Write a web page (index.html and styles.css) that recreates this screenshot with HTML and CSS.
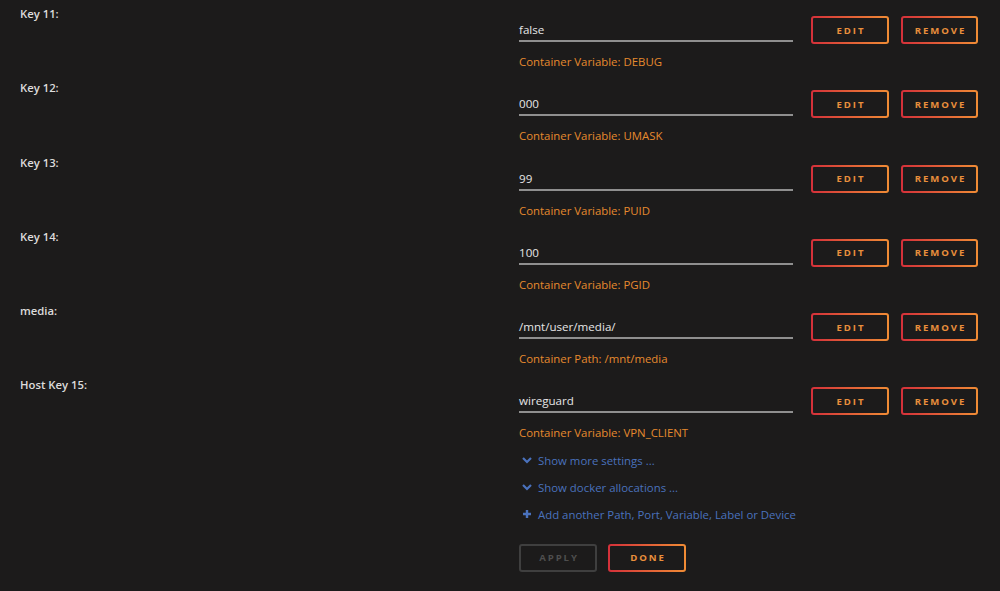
FILE: index.html
```html
<!DOCTYPE html>
<html lang="en">
<head>
    <meta charset="UTF-8" />
    <title>Container settings</title>
    <link rel="stylesheet" href="styles.css">
</head>
<body>
<div class="settings">
    <div class="row">
        <div class="label">Key 11:</div>
        <div class="value">
            <div class="field-line">
                <div class="input">false</div>
                <button class="btn">Edit</button>
                <button class="btn">Remove</button>
            </div>
            <div class="help">Container Variable: DEBUG</div>
        </div>
    </div>
    <div class="row">
        <div class="label">Key 12:</div>
        <div class="value">
            <div class="field-line">
                <div class="input">000</div>
                <button class="btn">Edit</button>
                <button class="btn">Remove</button>
            </div>
            <div class="help">Container Variable: UMASK</div>
        </div>
    </div>
    <div class="row">
        <div class="label">Key 13:</div>
        <div class="value">
            <div class="field-line">
                <div class="input">99</div>
                <button class="btn">Edit</button>
                <button class="btn">Remove</button>
            </div>
            <div class="help">Container Variable: PUID</div>
        </div>
    </div>
    <div class="row">
        <div class="label">Key 14:</div>
        <div class="value">
            <div class="field-line">
                <div class="input">100</div>
                <button class="btn">Edit</button>
                <button class="btn">Remove</button>
            </div>
            <div class="help">Container Variable: PGID</div>
        </div>
    </div>
    <div class="row">
        <div class="label">media:</div>
        <div class="value">
            <div class="field-line">
                <div class="input">/mnt/user/media/</div>
                <button class="btn">Edit</button>
                <button class="btn">Remove</button>
            </div>
            <div class="help">Container Path: /mnt/media</div>
        </div>
    </div>
    <div class="row">
        <div class="label">Host Key 15:</div>
        <div class="value">
            <div class="field-line">
                <div class="input">wireguard</div>
                <button class="btn">Edit</button>
                <button class="btn">Remove</button>
            </div>
            <div class="help">Container Variable: VPN_CLIENT</div>
        </div>
    </div>

    <div class="row extra">
        <div class="label"></div>
        <div class="value">
            <a href="#" class="link">
                <svg viewBox="0 0 10 10" width="10" height="10"><path d="M1 3 L5 7 L9 3" fill="none" stroke="currentColor" stroke-width="2.2"/></svg>
                Show more settings ...
            </a>
            <a href="#" class="link">
                <svg viewBox="0 0 10 10" width="10" height="10"><path d="M1 3 L5 7 L9 3" fill="none" stroke="currentColor" stroke-width="2.2"/></svg>
                Show docker allocations ...
            </a>
            <a href="#" class="link">
                <svg viewBox="0 0 10 10" width="10" height="10"><path d="M5 1 V9 M1 5 H9" fill="none" stroke="currentColor" stroke-width="2.4"/></svg>
                Add another Path, Port, Variable, Label or Device
            </a>
            <div class="actions">
                <button class="btn disabled">Apply</button>
                <button class="btn">Done</button>
            </div>
        </div>
    </div>
</div>
</body>
</html>
```

FILE: styles.css
```css
body {
    margin: 0;
    padding: 0;
    background-color: #1c1b1b;
    font-family: "Open Sans", "Noto Sans", sans-serif;
    color: #e2e2e2;
}
.settings {
    padding: 0 22px 0 20px;
}
.row {
    display: grid;
    grid-template-columns: 499px 1fr;
    height: 74.3px;
}
.label {
    padding-top: 6px;
    font-size: 11.3px;
    line-height: 16px;
    font-weight: 600;
    color: #dcdcdc;
}
.field-line {
    display: flex;
    align-items: flex-start;
    margin-top: 16px;
    height: 28px;
}
.input {
    width: 274px;
    height: 26px;
    box-sizing: border-box;
    padding-top: 6px;
    font-size: 11.6px;
    line-height: 16px;
    color: #e6e6e6;
    border-bottom: 2px solid #8f8f8f;
    margin-right: 18px;
}
.btn {
    width: 78px;
    height: 28px;
    margin-right: 12px;
    padding: 0 0 0 2px;
    box-sizing: border-box;
    font-family: "Open Sans", "Noto Sans", sans-serif;
    font-size: 9.6px;
    font-weight: 700;
    letter-spacing: 1.9px;
    text-transform: uppercase;
    color: #e98f3c;
    background: linear-gradient(#1c1b1b, #1c1b1b) padding-box,
                linear-gradient(90deg, #d4303a, #f08c35) border-box;
    border: 2px solid transparent;
    border-radius: 3px;
    cursor: pointer;
}
.btn:last-child {
    margin-right: 0;
    width: 77px;
}
.btn.disabled {
    color: #4e4e4e;
    background: #1c1b1b;
    border: 2px solid #3f3f3f;
    cursor: default;
}
.help {
    margin-top: 10px;
    font-size: 11.4px;
    line-height: 16px;
    color: #e68a2e;
}
.extra {
    height: auto;
    padding-top: 1px;
}
.link {
    display: flex;
    align-items: center;
    gap: 6px;
    height: 27px;
    font-size: 11.4px;
    color: #4a72bd;
    text-decoration: none;
    padding-left: 3px;
}
.link svg {
    flex: none;
}
.actions {
    display: flex;
    margin-top: 16px;
}
.actions .btn {
    margin-right: 11px;
}
.actions .btn:last-child {
    width: 78px;
    margin-right: 0;
}
```
